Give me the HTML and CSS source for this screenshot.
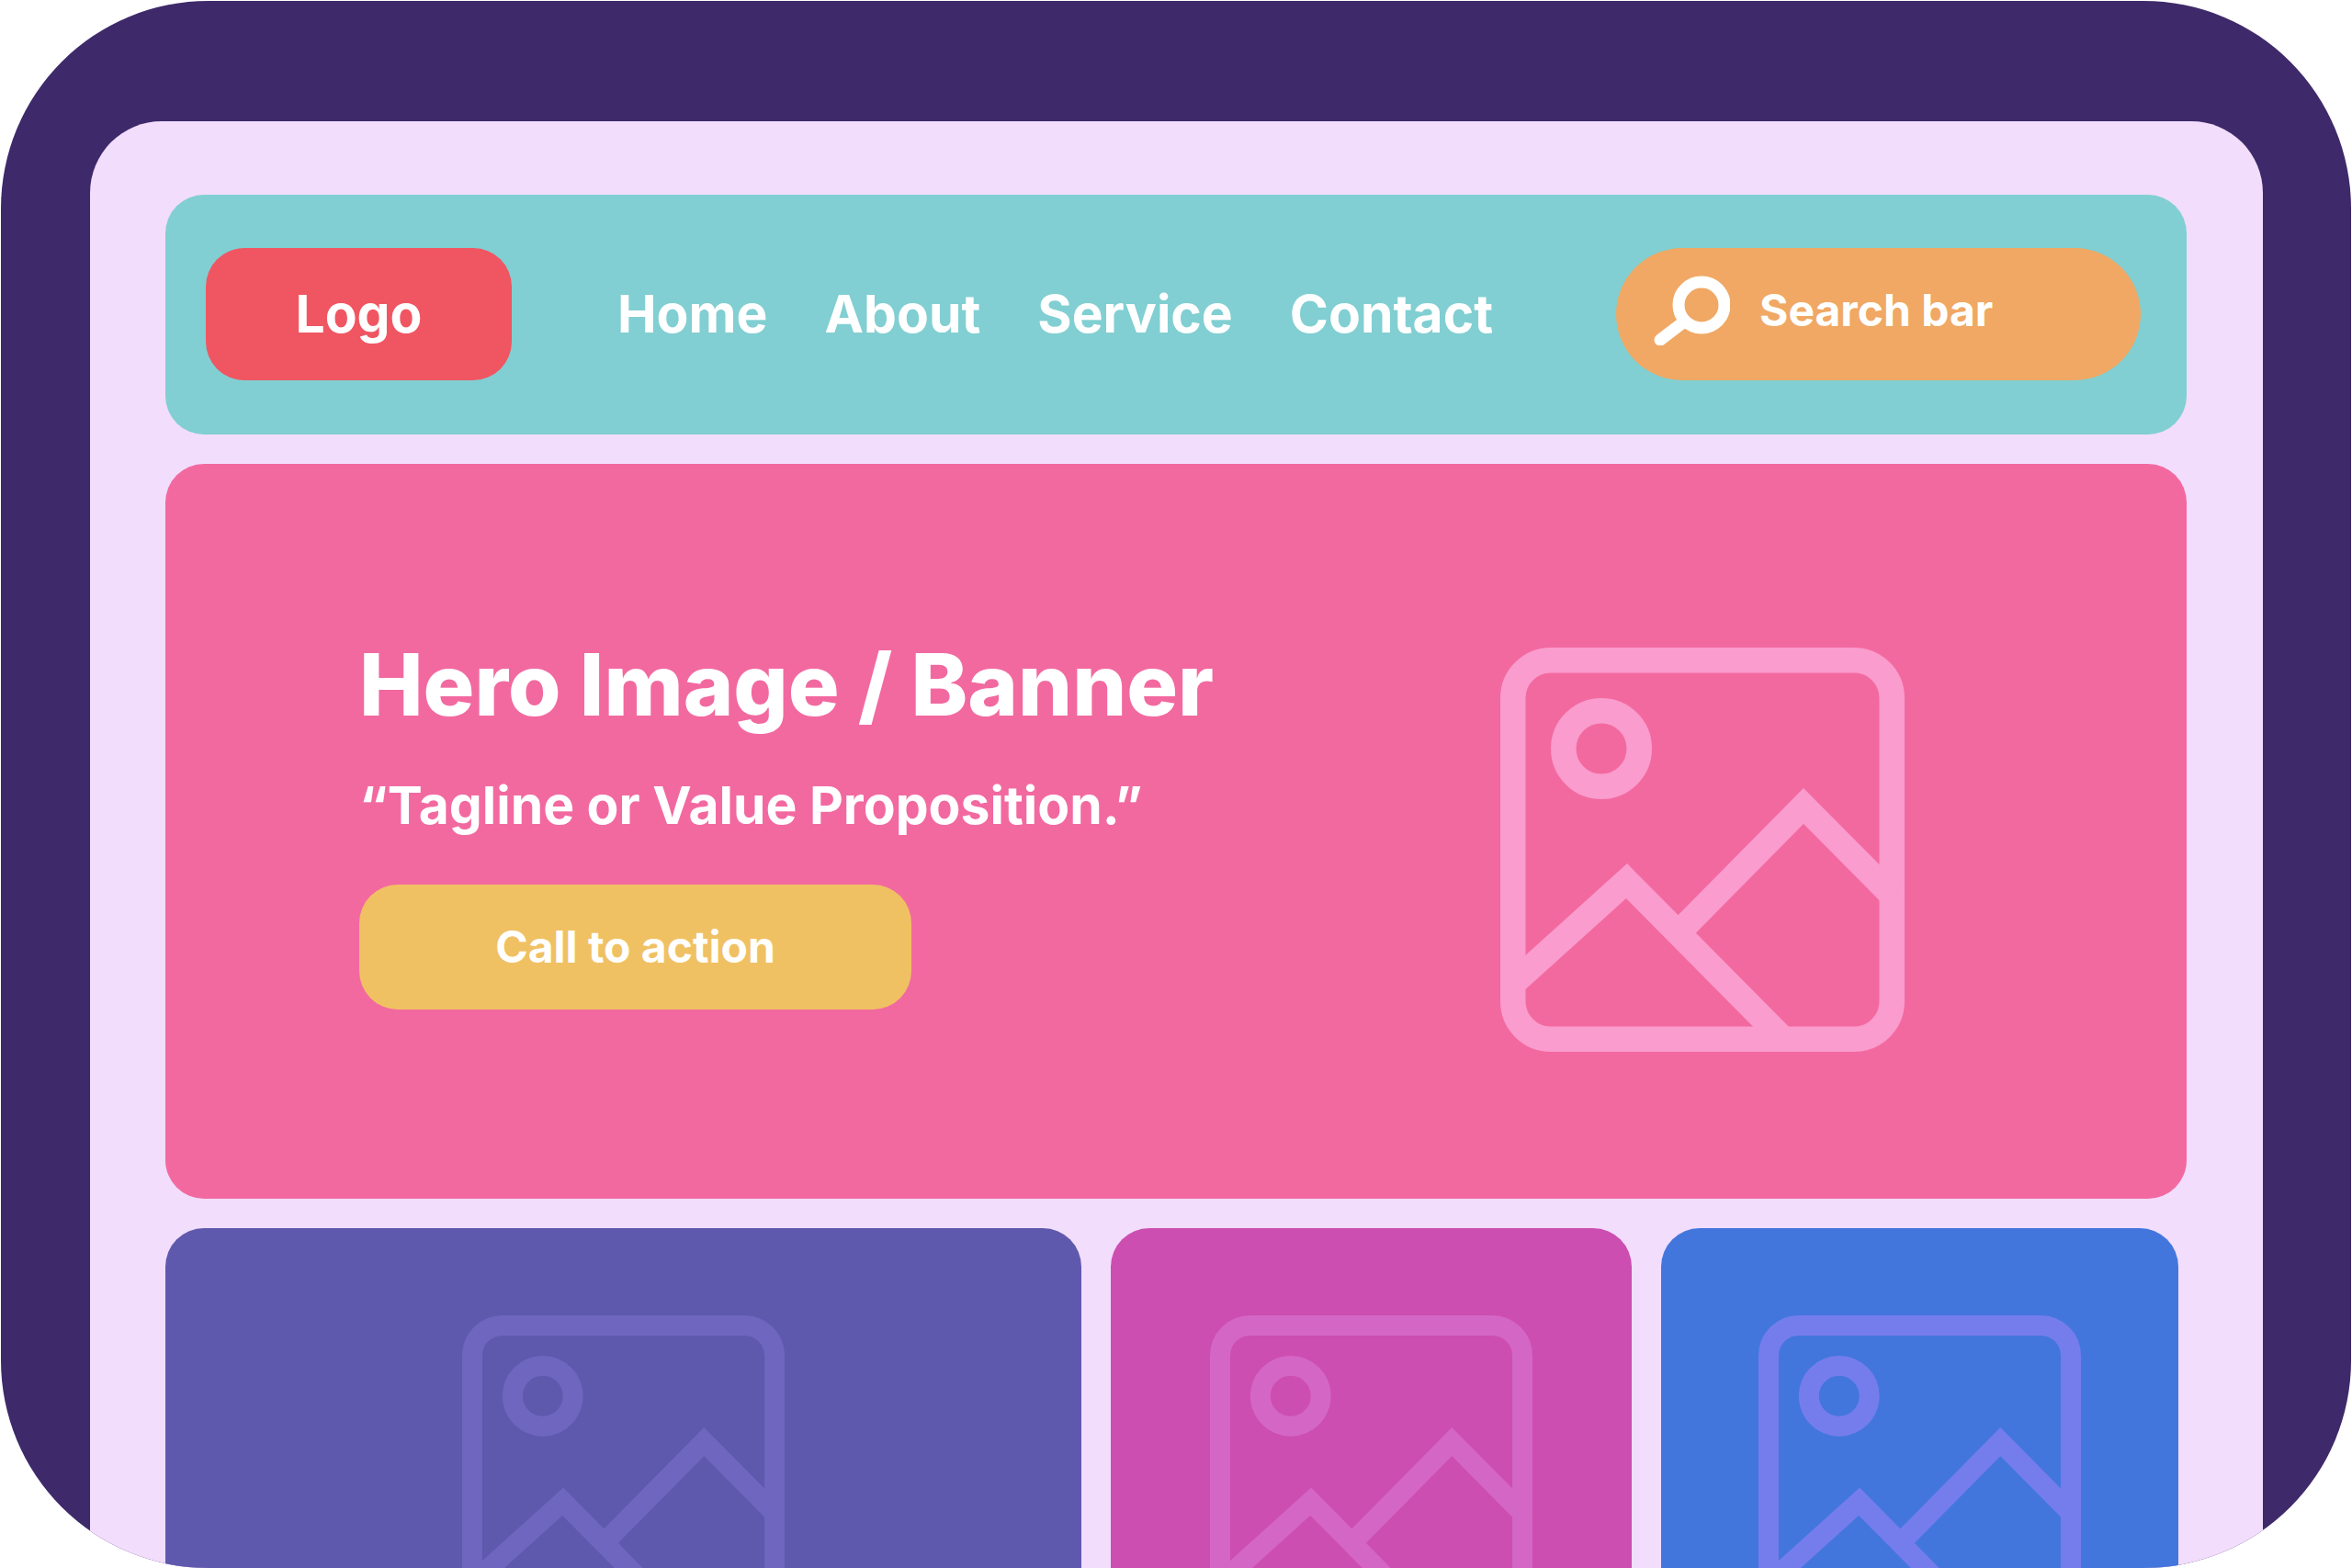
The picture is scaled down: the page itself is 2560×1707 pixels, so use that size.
FILE: index.html
```html
<!DOCTYPE html>
<html lang="en">
<head>
<meta charset="utf-8">
<meta name="viewport" content="width=device-width, initial-scale=1">
<title>Website layout</title>
<link rel="stylesheet" href="styles.css">
</head>
<body>
<svg class="sprite" aria-hidden="true">
  <symbol id="picture" viewBox="0 0 16 16">
    <g fill="none" stroke="currentColor">
      <rect x=".5" y=".5" width="15" height="15" rx="1.5"/>
      <circle cx="4" cy="4" r="1.5"/>
      <path d="M.5 13.3 5 9.24 11.2 15.5M7.3 11.03 12 6.27 15.5 9.8"/>
    </g>
  </symbol>
</svg>
<div class="frame">
  <div class="screen">
    <header class="header">
      <a class="logo" href="#">Logo</a>
      <nav class="nav">
        <a href="#">Home</a>
        <a href="#">About</a>
        <a href="#">Service</a>
        <a href="#">Contact</a>
      </nav>
      <label class="search">
        <svg class="search-icon" viewBox="0 0 84 76" role="img" aria-label="Search">
          <g fill="none" stroke="currentColor" stroke-linecap="round">
            <circle cx="53" cy="32" r="25" stroke-width="13"/>
            <path d="M33 51 8 70" stroke-width="13"/>
          </g>
        </svg>
        <input class="search-input" type="text" placeholder="Search bar">
      </label>
    </header>
    <section class="hero">
      <div class="hero-text">
        <h1 class="title">Hero Image / Banner</h1>
        <p class="tagline">“Tagline or Value Proposition.”</p>
        <button class="cta" type="button">Call to action</button>
      </div>
      <svg class="hero-picture"><use href="#picture"/></svg>
    </section>
    <section class="cards">
      <article class="card card-indigo"><svg class="card-picture"><use href="#picture"/></svg></article>
      <article class="card card-magenta"><svg class="card-picture"><use href="#picture"/></svg></article>
      <article class="card card-blue"><svg class="card-picture"><use href="#picture"/></svg></article>
    </section>
  </div>
</div>
</body>
</html>
```
FILE: styles.css
```css
* {
  box-sizing: border-box;
}

body {
  margin: 0;
  background: #fff;
  color: #fff;
  font-family: Inter, "Liberation Sans", sans-serif;
  font-size: 57px;
  font-weight: 700;
  line-height: 64px;
}

a {
  color: inherit;
  text-decoration: none;
}

.sprite {
  position: absolute;
  width: 0;
  height: 0;
}

.frame {
  display: flex;
  height: calc(100vh - 1px);
  margin: 1px 1px 0;
  padding: 131px 96px 0 97px;
  overflow: hidden;
  border-radius: 226px;
  background: #3e296a;
}

.screen {
  display: flex;
  flex: 1;
  flex-direction: column;
  gap: 32px;
  min-width: 0;
  padding: 80px 83px 0 82px;
  border-radius: 78px 78px 0 0;
  background: #f2ddfc;
}

.header,
.hero,
.logo,
.cta {
  border-radius: 42px;
}

.header {
  display: flex;
  flex-shrink: 0;
  align-items: center;
  padding: 58px 50px 59px 44px;
  background: #81cfd2;
}

.logo {
  width: 333px;
  padding: 40px 0;
  background: #f05662;
  text-align: center;
}

.nav {
  display: flex;
  gap: 62px;
  margin-left: 115px;
}

.search {
  display: flex;
  align-items: center;
  gap: 32px;
  width: 571px;
  height: 144px;
  margin-left: auto;
  padding: 0 40px 8px;
  border-radius: 72px;
  background: #f0a864;
}

.search-icon {
  flex-shrink: 0;
  width: 84px;
  height: 76px;
}

.search-input {
  flex: 1;
  min-width: 0;
  padding: 0;
  border: 0;
  outline: 0;
  background: none;
  color: inherit;
  font: inherit;
  font-size: 48px;
}

.search-input::placeholder {
  color: inherit;
  opacity: 1;
}

.hero {
  display: flex;
  flex-shrink: 0;
  align-items: flex-start;
  justify-content: space-between;
  padding: 188px 307px 160px 211px;
  background: #f269a0;
}

.title {
  margin: 0 0 48px;
  font-size: 93px;
  font-weight: 800;
  line-height: 104px;
}

.tagline {
  margin: 0 0 54px;
}

.cta {
  display: block;
  width: 601px;
  height: 136px;
  margin: 0;
  padding: 0;
  border: 0;
  background: #f0c163;
  color: inherit;
  font: inherit;
  font-size: 48px;
}

.hero-picture {
  width: 440px;
  height: 440px;
  margin: 12px 0 0;
  color: #fa9ccd;
}

.cards {
  display: grid;
  flex: 1;
  grid-template-columns: 997fr 566fr 563fr;
  gap: 32px;
  min-height: 0;
  margin-right: 9px;
}

.card {
  display: flex;
  align-items: flex-start;
  justify-content: center;
  min-height: 0;
  padding-top: 95px;
  overflow: hidden;
  border-radius: 42px 42px 0 0;
}

.card-picture {
  flex-shrink: 0;
  width: 351px;
  height: 351px;
}

.card-indigo {
  background: #5f59ae;
  color: #6f67bf;
}

.card-magenta {
  background: #cc4eb0;
  color: #d466c6;
}

.card-blue {
  background: #4376dc;
  color: #757dec;
}
```
